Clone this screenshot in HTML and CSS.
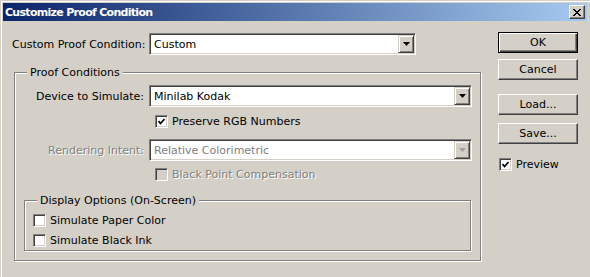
FILE: index.html
```html
<!DOCTYPE html>
<html lang="en">

<head>
  <meta charset="UTF-8" />
  <title>Customize Proof Condition</title>
  <link rel="stylesheet" href="styles.css">
</head>

<body>
  <div class="window">
    <div class="titlebar">
      <span class="title">Customize Proof Condition</span>
      <span class="close">
        <svg width="8" height="7" viewBox="0 0 8 7"><path d="M0 0 L7 7 M1 0 L8 7 M7 0 L0 7 M8 0 L1 7" stroke="#000" stroke-width="1"/></svg>
      </span>
    </div>

    <div class="client">
      <div class="main">
        <!-- Condition picker -->
        <div class="row-top">
          <label class="lbl-top">Custom Proof Condition:</label>
          <div class="select sel-top">
            <span class="sel-text">Custom</span>
            <span class="drop"><svg width="7" height="4"><polygon points="0,0 7,0 3.5,4" fill="#000"/></svg></span>
          </div>
        </div>

        <!-- Proof Conditions -->
        <fieldset class="group group-proof">
          <legend>Proof Conditions</legend>
          <div class="frow first">
            <label>Device to Simulate:</label>
            <div class="select sel-wide">
              <span class="sel-text">Minilab Kodak</span>
              <span class="drop"><svg width="7" height="4"><polygon points="0,0 7,0 3.5,4" fill="#000"/></svg></span>
            </div>
          </div>
          <div class="crow indent gap-a">
            <span class="check"><svg width="7" height="7"><polyline points="0.5,3 2.5,5.5 6.5,1" fill="none" stroke="#000" stroke-width="1.6"/></svg></span>
            <span>Preserve RGB Numbers</span>
          </div>
          <div class="frow disabled gap-b">
            <label>Rendering Intent:</label>
            <div class="select sel-wide">
              <span class="sel-text">Relative Colorimetric</span>
              <span class="drop"><svg width="7" height="4"><polygon points="0,0 7,0 3.5,4" fill="#a0a0a0"/></svg></span>
            </div>
          </div>
          <div class="crow indent disabled gap-c">
            <span class="check off"></span>
            <span>Black Point Compensation</span>
          </div>

          <fieldset class="group group-display">
            <legend>Display Options (On-Screen)</legend>
            <div class="crow sub first-sub">
              <span class="check"></span>
              <span>Simulate Paper Color</span>
            </div>
            <div class="crow sub gap-d">
              <span class="check"></span>
              <span>Simulate Black Ink</span>
            </div>
          </fieldset>
        </fieldset>
      </div>

      <!-- Buttons -->
      <div class="side">
        <button class="btn btn-default">OK</button>
        <button class="btn btn-cancel">Cancel</button>
        <button class="btn btn-load">Load...</button>
        <button class="btn btn-save">Save...</button>
        <div class="crow preview">
          <span class="check"><svg width="7" height="7"><polyline points="0.5,3 2.5,5.5 6.5,1" fill="none" stroke="#000" stroke-width="1.6"/></svg></span>
          <span>Preview</span>
        </div>
      </div>
    </div>
  </div>
</body>

</html>
```

FILE: styles.css
```css
body {
  margin: 0;
  background: #d4d0c8;
  font-family: "DejaVu Sans", sans-serif;
  font-size: 11px;
  color: #000;
}

.window {
  width: 590px;
  height: 277px;
  box-sizing: border-box;
  padding: 3px 0 0 3px;
  box-shadow: inset 1px 1px 0 #d4d0c8, inset 2px 2px 0 #fff;
  overflow: hidden;
}

.titlebar {
  height: 18px;
  margin-right: 3px;
  padding: 0 2px;
  display: flex;
  align-items: center;
  justify-content: space-between;
  background: linear-gradient(to right, #0a246a, #a6caf0);
}

.title {
  color: #fff;
  font-weight: bold;
  letter-spacing: -0.7px;
}

.close {
  width: 16px;
  height: 14px;
  box-sizing: border-box;
  display: flex;
  align-items: center;
  justify-content: center;
  background: #d4d0c8;
  border: 1px solid;
  border-color: #fff #404040 #404040 #fff;
  box-shadow: inset -1px -1px 0 #808080;
}

.client {
  display: flex;
  padding-top: 12px;
}

.main {
  flex: none;
  width: 495px;
}

.row-top {
  display: flex;
  align-items: center;
  margin-left: 9px;
}

.lbl-top {
  width: 137px;
}

/* sunken combo box */
.select {
  height: 22px;
  box-sizing: border-box;
  display: flex;
  align-items: center;
  justify-content: space-between;
  padding: 1px;
  background: #fff;
  border: 1px solid;
  border-color: #808080 #fff #fff #808080;
  box-shadow: inset 1px 1px 0 #404040, inset -1px -1px 0 #d4d0c8;
}

.sel-top {
  width: 267px;
}

.sel-wide {
  width: 323px;
}

.sel-text {
  padding-left: 3px;
}

.drop {
  width: 16px;
  height: 18px;
  box-sizing: border-box;
  display: flex;
  align-items: center;
  justify-content: center;
  background: #d4d0c8;
  border: 1px solid;
  border-color: #d4d0c8 #404040 #404040 #d4d0c8;
  box-shadow: inset 1px 1px 0 #fff, inset -1px -1px 0 #808080;
}

/* etched group boxes */
.group {
  margin: 0;
  padding: 0;
  min-width: 0;
  border: 1px solid #808080;
  box-shadow: inset 1px 1px 0 #fff, 1px 1px 0 #fff;
}

.group legend {
  padding: 0 3px;
  margin-left: 12px;
  line-height: 13px;
  background: #d4d0c8;
}

.group-proof {
  margin: 11px 0 0 11px;
  width: 467px;
  box-sizing: border-box;
  padding-bottom: 9px;
}

.frow {
  display: flex;
  align-items: center;
}

.frow label {
  width: 129px;
  padding-right: 5px;
  text-align: right;
}

.frow.first {
  margin-top: 6px;
}

.crow {
  height: 15px;
  display: flex;
  align-items: center;
  gap: 4px;
}

.indent {
  margin-left: 140px;
}

.gap-a {
  margin-top: 7px;
}

.gap-b {
  margin-top: 10px;
}

.gap-c {
  margin-top: 6px;
}

.gap-d {
  margin-top: 5px;
}

.disabled {
  color: #808080;
  text-shadow: 1px 1px 0 #fff;
}

.disabled .sel-text {
  text-shadow: none;
}

.check {
  width: 13px;
  height: 13px;
  box-sizing: border-box;
  display: flex;
  align-items: center;
  justify-content: center;
  background: #fff;
  border: 1px solid;
  border-color: #808080 #fff #fff #808080;
  box-shadow: inset 1px 1px 0 #404040, inset -1px -1px 0 #d4d0c8;
}

.check.off {
  background: #d4d0c8;
}

.group-display {
  margin: 12px 0 0 9px;
  width: 447px;
  box-sizing: border-box;
  padding-bottom: 2px;
}

.sub {
  margin-left: 8px;
}

.first-sub {
  margin-top: 6px;
}

/* command buttons */
.side {
  flex: none;
  width: 80px;
  margin-top: -1px;
  display: flex;
  flex-direction: column;
}

.btn {
  height: 21px;
  padding: 0;
  font: inherit;
  color: #000;
  background: #d4d0c8;
  border: 1px solid;
  border-color: #fff #404040 #404040 #fff;
  box-shadow: inset -1px -1px 0 #808080;
}

.btn-default {
  border-color: #000;
  box-shadow: inset 1px 1px 0 #fff, inset -1px -1px 0 #404040, inset -2px -2px 0 #808080;
}

.btn-cancel {
  margin-top: 6px;
}

.btn-load {
  margin-top: 14px;
}

.btn-save {
  margin-top: 8px;
}

.preview {
  margin-top: 13px;
  margin-left: 1px;
}
```
